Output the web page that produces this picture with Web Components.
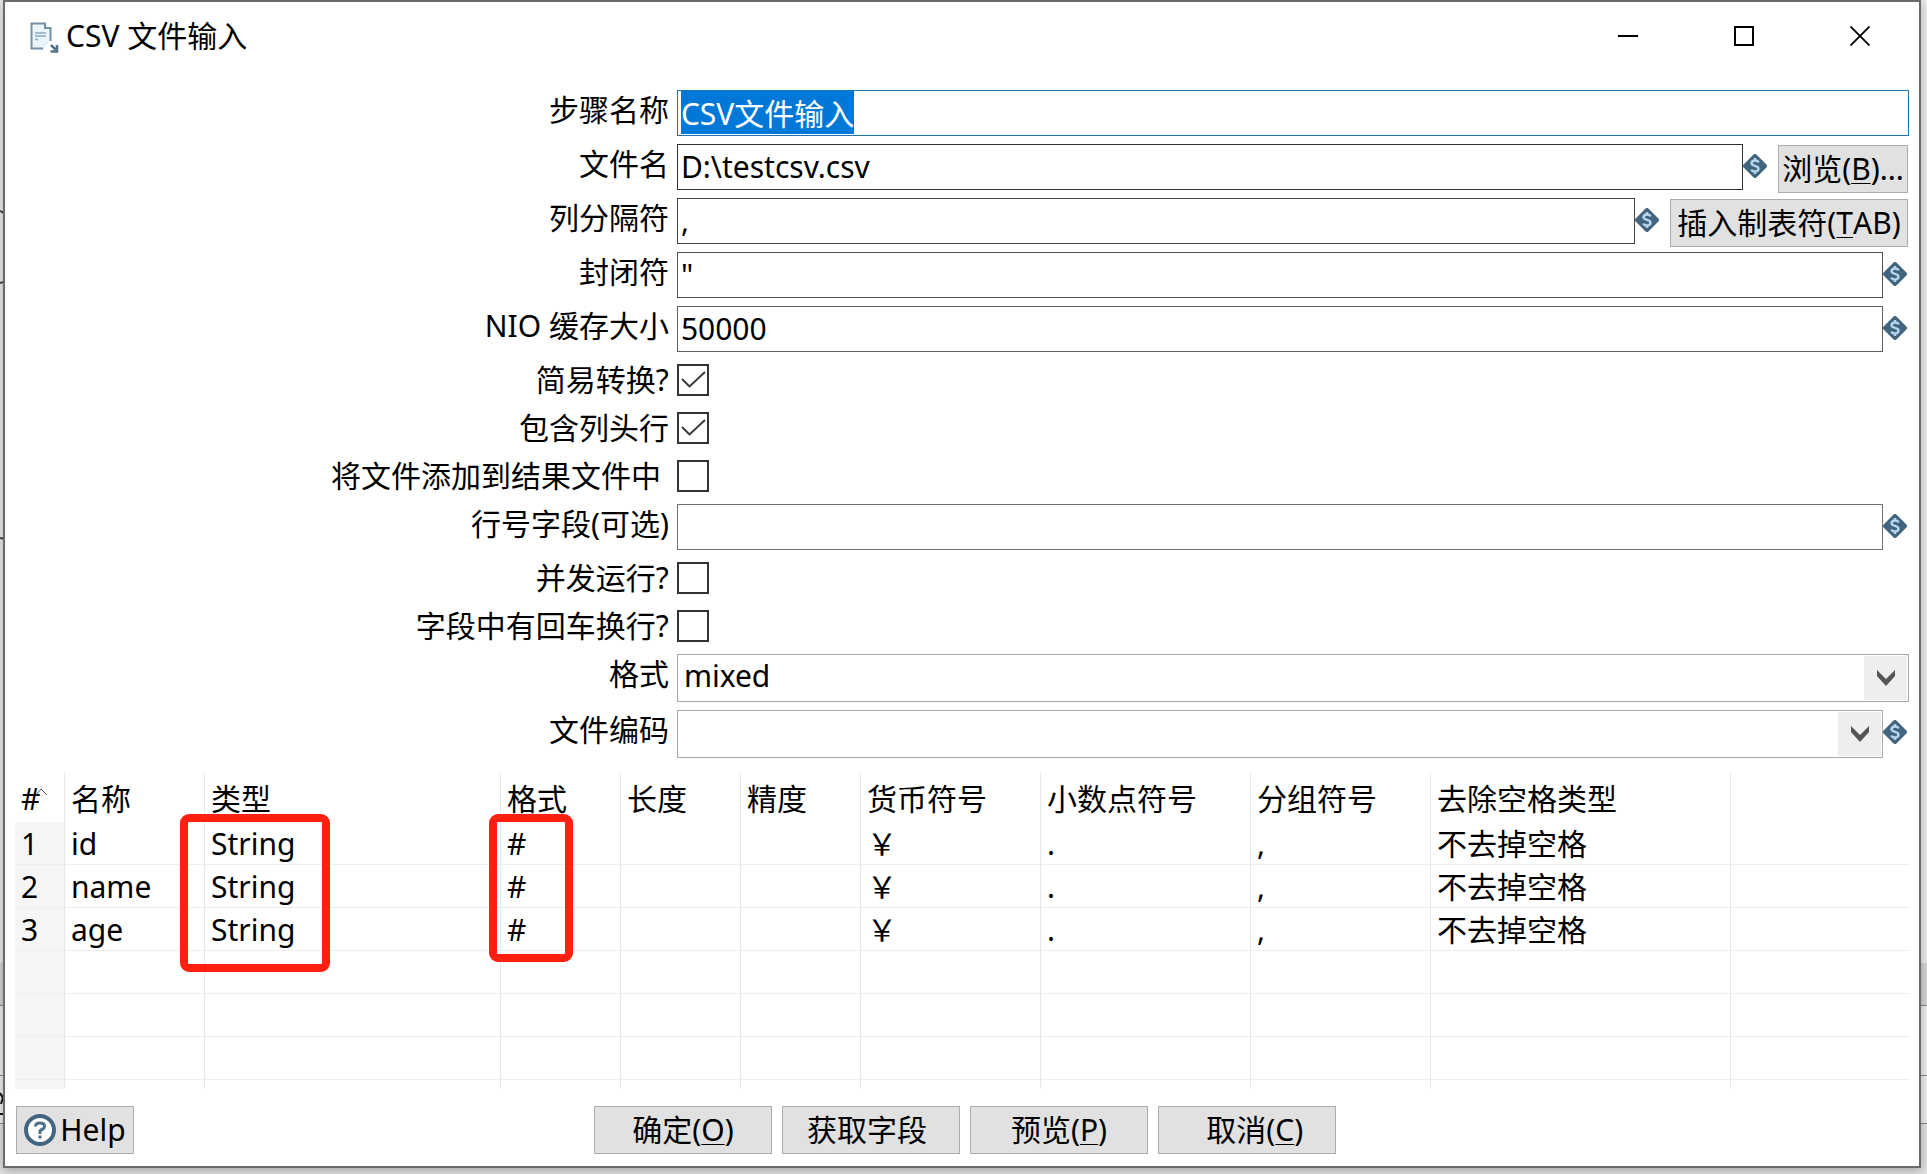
<!DOCTYPE html>
<html lang="zh-CN">
<head>
<meta charset="utf-8">
<title>CSV 文件输入</title>
<style>
  html, body { margin: 0; height: 100%; }
  body {
    font: 30px/40px "Noto Sans", "Noto Sans CJK SC", sans-serif;
    color: #000;
    overflow: hidden;
  }
</style>
</head>
<body>
<app-backdrop>
  <dialog-window heading="CSV 文件输入">
    <text-field label="步骤名称" value="CSV文件输入" tone="#1e74ad" selected></text-field>
    <text-field label="文件名" value="D:\testcsv.csv" tone="#333" variable>
      <push-button slot="action" compact width="130">浏览(<u>B</u>)...</push-button>
    </text-field>
    <text-field label="列分隔符" value="," tone="#444" variable>
      <push-button slot="action" compact width="238">插入制表符(<u>T</u>AB)</push-button>
    </text-field>
    <text-field label="封闭符" value="&quot;" tone="#505050" variable></text-field>
    <text-field label="NIO 缓存大小" value="50000" tone="#606060" variable></text-field>
    <check-field label="简易转换?" checked></check-field>
    <check-field label="包含列头行" checked></check-field>
    <check-field label="将文件添加到结果文件中 "></check-field>
    <text-field label="行号字段(可选)" value="" tone="#707070" variable></text-field>
    <check-field label="并发运行?"></check-field>
    <check-field label="字段中有回车换行?"></check-field>
    <select-field label="格式" value="mixed"></select-field>
    <select-field label="文件编码" value="" variable></select-field>
    <field-table slot="table"></field-table>
    <push-button slot="help" width="118"><help-icon></help-icon>Help</push-button>
    <push-button slot="buttons" width="178">确定(<u>O</u>)</push-button>
    <push-button slot="buttons" width="178">获取字段 </push-button>
    <push-button slot="buttons" width="178">预览(<u>P</u>)</push-button>
    <push-button slot="buttons" width="178">  取消(<u>C</u>)</push-button>
  </dialog-window>
</app-backdrop>

<script>
const define = (name, render, after) => customElements.define(name, class extends HTMLElement {
  connectedCallback() {
    if (this.shadowRoot) return;
    const root = this.attachShadow({ mode: 'open' });
    const template = document.createElement('template');
    template.innerHTML = render(this);
    root.append(template.content.cloneNode(true));
    if (after) after(this, root);
  }
});

const escapeText = (s) => (s || '').replace(/&/g, '&amp;').replace(/"/g, '&quot;').replace(/</g, '&lt;');

const rowStyle = `
  :host { display: grid; grid-template-columns: 35% minmax(0, 1fr); column-gap: 2px; min-height: 54px; }
  label { text-align: right; white-space: pre; padding-right: 6px; line-height: 40px; }
  .control { display: flex; align-items: flex-start; min-width: 0; padding-right: 10px; }
  :host([variable]) .control { padding-right: 12px; }
  variable-icon { margin-top: 10px; flex: none; }
`;

/* The main window that lies behind the dialog */
define('app-backdrop', () => `
  <style>
    :host {
      display: flex; position: relative; height: 100vh; box-sizing: border-box; padding: 0 6px 6px 3px;
      background: linear-gradient(#ebedef 0 963px, #d6d6d6 963px 1005px, #888 1005px 1006px,
        #f0f0f0 1006px 1075px, #888 1075px 1076px, #f0f0f0 1076px 1123px, #888 1123px 1124px, #e2e2e2 1124px);
    }
    svg { position: absolute; left: 0; top: 0; width: 5px; height: 100%; }
    ::slotted(*) { flex: 1; min-width: 0; }
  </style>
  <svg aria-hidden="true" fill="none" stroke="#444" stroke-width="2">
    <path d="M0 211Q3 212 5 215M0 283Q3 282 5 282M0 538Q3 539 5 538"/>
    <path d="M0 1093L3 1098M5 1091L1 1104M3 1104H5M0 1114H5" stroke="#111"/>
  </svg>
  <slot></slot>`);

define('document-icon', () => `
  <style>:host { display: block; width: 30px; height: 32px; } svg { display: block; }</style>
  <svg width="30" height="32" viewBox="0 0 30 32" aria-hidden="true" fill="none">
    <path d="M1 1H15L20 6V19L14 27H1Z" fill="#eaf4fc"/>
    <path d="M13 26.500H1.500V1.500H15V6H20.500V19" stroke="#7390a5" stroke-width="2"/>
    <path d="M5 11H16M5 14H16M5 17.500H8" stroke="#8aa9c2" stroke-width="1.500"/>
    <path d="M21 23L26 28M27 23V29.500H20.500" stroke="#557388" stroke-width="2.500"/>
  </svg>`);

define('variable-icon', () => `
  <style>:host { display: block; width: 24px; height: 24px; } svg { display: block; }</style>
  <svg width="24" height="24" viewBox="0 0 24 24" aria-hidden="true" fill="none">
    <path d="M12 2L22 12L12 22L2 12Z" fill="#42657f" stroke="#42657f" stroke-width="4" stroke-linejoin="round"/>
    <path d="M15.500 8.500Q15 6.500 12 6.500T8.500 9Q8.500 11 12 11.800T15.500 15Q15 17.500 12 17.500T8.500 15.500M12 4V7M12 17V20" stroke="#b5d6ee" stroke-width="2.400"/>
  </svg>`);

define('help-icon', () => `
  <style>:host { display: block; width: 32px; height: 32px; white-space: normal; } svg { display: block; }</style>
  <svg width="32" height="32" viewBox="0 0 32 32" aria-hidden="true" fill="none">
    <circle cx="16" cy="16" r="14" fill="#fff" stroke="#42657f" stroke-width="4"/>
    <path d="M11.500 12.500Q11.500 9 16 9T20.500 12Q20.500 14.500 18 15.500T16 19V20M16 21.500V24.500" stroke="#50718a" stroke-width="3"/>
  </svg>`);

define('push-button', (el) => `
  <style>
    :host { display: block; flex: none; width: ${el.getAttribute('width')}px; }
    button {
      display: flex; align-items: center; justify-content: center; box-sizing: border-box;
      height: 48px; width: 100%; margin: 0; padding: 0; white-space: pre;
      font: inherit; line-height: 42px; color: inherit; background: #e1e1e1; border: 1px solid #adadad; border-radius: 0;
    }
    :host([compact]) { margin: 1px 0 0 11px; }
    ::slotted(u) { text-decoration-thickness: 1px; text-underline-offset: 3px; }
    ::slotted(help-icon) { margin-right: 4px; }
  </style>
  <button type="button"><slot></slot></button>`);

define('text-field', (el) => `
  <style>
    ${rowStyle}
    :host([variable]) .control:has(push-button) { padding-right: 11px; }
    ::slotted(push-button) { margin-right: -1px; }
    input {
      flex: 1; min-width: 0; height: 46px; box-sizing: border-box; margin: 0; padding: 1px 3px 3px;
      font: inherit; line-height: 40px; color: inherit; background: #fff;
      border: 1px solid ${el.getAttribute('tone')}; border-radius: 0; outline: none;
    }
    input::selection { background: #0078d7; color: #fff; }
  </style>
  <label for="f">${escapeText(el.getAttribute('label'))}</label>
  <div class="control">
    <input id="f" type="text" value="${escapeText(el.getAttribute('value'))}">
    ${el.hasAttribute('variable') ? '<variable-icon></variable-icon>' : ''}
    <slot name="action"></slot>
  </div>`,
  (el, root) => {
    if (!el.hasAttribute('selected')) return;
    const input = root.querySelector('input');
    input.focus();
    input.select();
  });

define('check-field', (el) => `
  <style>
    ${rowStyle}
    :host { min-height: 48px; }
    .box { position: relative; width: 32px; height: 32px; margin-top: 4px; }
    input { display: block; appearance: none; box-sizing: border-box; width: 32px; height: 32px; margin: 0; border: 2px solid #333; background: #fff; }
    svg { position: absolute; inset: 0; pointer-events: none; visibility: hidden; }
    input:checked + svg { visibility: visible; }
  </style>
  <label for="f">${escapeText(el.getAttribute('label'))}</label>
  <div class="control">
    <div class="box">
      <input id="f" type="checkbox" ${el.hasAttribute('checked') ? 'checked' : ''}>
      <svg width="32" height="32" viewBox="0 0 32 32" aria-hidden="true"><path d="M5 15L12.500 22.500L28 8" fill="none" stroke="#333" stroke-width="1.800"/></svg>
    </div>
  </div>`);

define('select-field', (el) => `
  <style>
    ${rowStyle}
    :host { min-height: 56px; }
    .box { position: relative; flex: 1; min-width: 0; }
    select {
      display: block; appearance: none; width: 100%; height: 48px; box-sizing: border-box; margin: 0; padding: 0 48px 5px 6px;
      font: inherit; line-height: 40px; color: inherit; background: #fff; border: 1px solid #a8a8a8; border-radius: 0;
    }
    .arrow {
      position: absolute; top: 2px; right: 2px; bottom: 2px; width: 43px; background: #eee;
      display: flex; align-items: center; justify-content: center; pointer-events: none;
    }
  </style>
  <label for="f">${escapeText(el.getAttribute('label'))}</label>
  <div class="control">
    <div class="box">
      <select id="f"><option>${escapeText(el.getAttribute('value'))}</option></select>
      <span class="arrow"><svg width="18" height="16" viewBox="0 0 18 16" aria-hidden="true"><path d="M0 0L9 9L18 0V6L9 16L0 6Z" fill="#555"/></svg></span>
    </div>
    ${el.hasAttribute('variable') ? '<variable-icon></variable-icon>' : ''}
  </div>`);

const columns = [['名称', 140], ['类型', 296], ['格式', 120], ['长度', 120], ['精度', 120], ['货币符号', 180], ['小数点符号', 210], ['分组符号', 180], ['去除空格类型', 300], ['', 0]];
const records = ['id', 'name', 'age'].map((name) => [name, 'String', '#', '', '', '￥', '.', ',', '不去掉空格', '']);
const blank = columns.map(() => '');

define('field-table', () => `
  <style>
    :host { display: block; position: relative; }
    table { width: 100%; table-layout: fixed; border-collapse: separate; border-spacing: 0; }
    th, td {
      box-sizing: border-box; height: 43px; padding: 2px 0 0 6px; font-weight: 400; text-align: left; white-space: nowrap;
      line-height: 40px; border-right: 1px solid #e8e8e8; border-bottom: 1px solid #eee;
    }
    thead th { height: 49px; border-bottom: 0; line-height: 47px; }
    tbody th { background: #f5f5f5; }
    tr > :last-child { border-right: 0; }
    tr.rest > * { height: 9px; padding: 0; border-bottom: 0; }
    thead svg { margin-left: -4px; vertical-align: 14px; }
    .mark { position: absolute; top: 41px; box-sizing: border-box; border: 8px solid #ff2010; border-radius: 9px; pointer-events: none; }
    .type { left: 165px; width: 150px; height: 158px; }
    .format { left: 474px; width: 84px; height: 148px; }
  </style>
  <table>
    <colgroup><col style="width:50px">${columns.map(([, w]) => w ? `<col style="width:${w}px">` : '<col>').join('')}</colgroup>
    <thead><tr>
      <th scope="col">#<svg width="12" height="8" viewBox="0 0 12 8" aria-hidden="true"><path d="M0 7L5 1L11 7" fill="none" stroke="#555"/></svg></th>
      ${columns.map(([t]) => `<th scope="col">${t}</th>`).join('')}
    </tr></thead>
    <tbody>
      ${[...records, blank, blank, blank].map((r, i) => `<tr><th scope="row">${i < records.length ? i + 1 : ''}</th>${r.map((c) => `<td>${c}</td>`).join('')}</tr>`).join('')}
      <tr class="rest"><th></th>${blank.map(() => '<td></td>').join('')}</tr>
    </tbody>
  </table>
  <div class="mark type"></div>
  <div class="mark format"></div>`);

define('dialog-window', (el) => `
  <style>
    :host {
      display: flex; flex-direction: column; position: relative; box-sizing: border-box; background: #fff;
      border: 2px solid #6b6b6b; box-shadow: 0 2px 10px rgba(0, 0, 0, .3);
    }
    header { display: flex; align-items: flex-start; height: 88px; padding: 0 1px 0 25px; }
    document-icon { margin: 20px 6px 0 0; }
    h1 { flex: 1; margin: 0; font: inherit; line-height: 68px; }
    header button {
      width: 116px; height: 68px; padding: 0; border: 0; background: none;
      display: flex; align-items: center; justify-content: center;
    }
    .table { padding: 7px 10px 0 10px; }
    footer { display: grid; grid-template-columns: 1fr auto 1fr; padding: 17px 5px 0 11px; }
    .help { justify-self: start; display: flex; }
    .buttons { display: flex; gap: 10px; }
  </style>
  <header>
    <document-icon></document-icon>
    <h1>${escapeText(el.getAttribute('heading'))}</h1>
    <button type="button" aria-label="最小化"><svg width="20" height="20" aria-hidden="true"><path d="M0 10H20" stroke="#000" stroke-width="2"/></svg></button>
    <button type="button" aria-label="最大化"><svg width="20" height="20" aria-hidden="true"><path d="M1 1H19V19H1Z" fill="none" stroke="#000" stroke-width="2"/></svg></button>
    <button type="button" aria-label="关闭"><svg width="20" height="20" aria-hidden="true"><path d="M0.500 0.500L19.500 19.500M19.500 0.500L0.500 19.500" stroke="#000" stroke-width="1.800"/></svg></button>
  </header>
  <main><slot></slot></main>
  <div class="table"><slot name="table"></slot></div>
  <footer>
    <div class="help"><slot name="help"></slot></div>
    <div class="buttons"><slot name="buttons"></slot></div>
  </footer>`);
</script>
</body>
</html>
